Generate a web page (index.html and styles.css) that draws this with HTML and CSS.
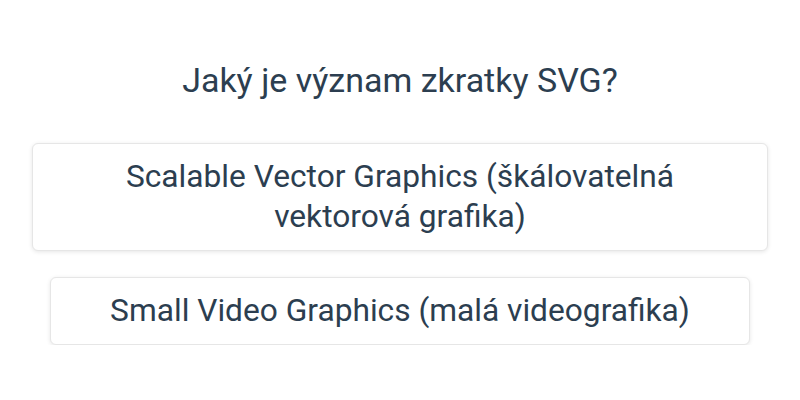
FILE: index.html
```html
<!DOCTYPE html>
<html lang="cs">
<head>
    <meta charset="UTF-8">
    <meta name="viewport" content="width=device-width, initial-scale=1.0">
    <title>Kvíz</title>
    <link rel="stylesheet" href="styles.css">
</head>
<body>
    <div class="quiz">
        <h1 class="question">Jaký je význam zkratky SVG?</h1>
        <div class="answers">
            <button class="answer">Scalable Vector Graphics (škálovatelná vektorová grafika)</button>
            <button class="answer">Small Video Graphics (malá videografika)</button>
        </div>
    </div>
</body>
</html>
```

FILE: styles.css
```css
/* Reset */
* {
    margin: 0;
    padding: 0;
    box-sizing: border-box;
}

body {
    font-family: Roboto, "Liberation Sans", sans-serif;
    background: #ffffff;
    color: #2c3e50;
}

/* Bloc de la question */
.quiz {
    display: flex;
    flex-direction: column;
    align-items: center;
    padding: 60px 32px 0;
}

.question {
    font-size: 34px;
    font-weight: 400;
    line-height: 40px;
    text-align: center;
    margin-bottom: 43px;
}

/* Réponses */
.answers {
    display: flex;
    flex-direction: column;
    align-items: center;
    gap: 26px;
    width: 100%;
}

.answer {
    max-width: 100%;
    padding: 13px 59px;
    font-family: inherit;
    font-size: 31.7px;
    line-height: 40px;
    color: #2c3e50;
    background: #fff;
    border: 1px solid #e6e6e6;
    border-radius: 6px;
    box-shadow: 0 1px 4px rgba(0, 0, 0, 0.1);
    cursor: pointer;
}
```
